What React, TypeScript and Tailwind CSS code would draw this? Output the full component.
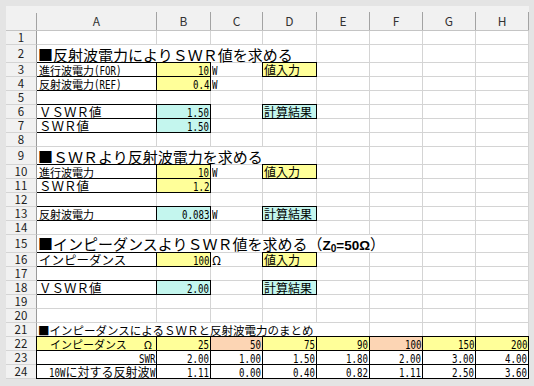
import React from 'react';

type Fill = 'w' | 'y' | 'c' | 'p';
type Edge = 'none' | 'tb' | 'box';

interface CellDef {
  v?: React.ReactNode;
  span?: number;
  fill?: Fill;
  edge?: Edge;
  cls?: string;
}

const fills: Record<Fill, string> = {
  w: 'bg-white',
  y: 'bg-[#ffff99]',
  c: 'bg-[#c4f6ee]',
  p: 'bg-[#fcd5b4]',
};

// black borders: own right/bottom border plus shadows painted over the neighbours' grid lines
const edges: Record<Edge, string> = {
  none: 'border-r-[#d4d4d4] border-b-[#d4d4d4]',
  tb: 'border-r-[#d4d4d4] border-b-black shadow-[0_-1px_0_#000]',
  box: 'border-r-black border-b-black shadow-[0_-1px_0_#000,-1px_0_0_#000,-1px_-1px_0_#000]',
};

const spans: Record<number, string> = {
  1: '',
  3: 'col-span-3',
  4: 'col-span-4',
  5: 'col-span-5',
  6: 'col-span-6',
};

// condensed half-width text (numbers, units, ascii labels)
const Narrow = ({ v }: { v: string }) => (
  <span
    className="inline-block origin-left scale-x-[0.7] font-['DejaVu_Sans_Mono',monospace] text-[13px] leading-[11px]"
    style={{ marginRight: -(v.length * 2.34) }}
  >
    {v}
  </span>
);

const blank = (count: number): CellDef[] => Array.from({ length: count }, () => ({}));

const num = (v: string, fill: Fill = 'w'): CellDef => ({
  v: <Narrow v={v} />,
  fill,
  edge: 'box',
  cls: 'justify-end pr-px',
});

const unit = (v: string): CellDef => ({ v: <Narrow v={v} />, cls: 'pl-px' });

const tag = (t: string, fill: Fill): CellDef => ({
  v: <span className="text-[12px]">{t}</span>,
  fill,
  edge: 'box',
  cls: 'pl-px',
});

const small = (jp: string, latin?: string): CellDef => ({
  v: (
    <>
      <span className="text-[11px]">{jp}</span>
      {latin && <Narrow v={latin} />}
    </>
  ),
  edge: 'tb',
  cls: 'pl-[2px]',
});

const big = (t: string): CellDef => ({
  v: <span className="text-[12.5px]">{t}</span>,
  edge: 'tb',
  cls: 'pl-[2px]',
});

const title = (t: React.ReactNode, span: number, size = 'text-[15px]'): CellDef => ({
  v: <span className={size}>{t}</span>,
  span,
  cls: 'pl-px',
});

const rows: CellDef[][] = [
  blank(8),
  [title('■反射波電力によりＳＷＲ値を求める', 4), ...blank(4)],
  [small('進行波電力', '(FOR)'), num('10', 'y'), unit('W'), tag('値入力', 'y'), ...blank(4)],
  [small('反射波電力', '(REF)'), num('0.4', 'y'), unit('W'), ...blank(5)],
  blank(8),
  [big('ＶＳＷＲ値'), num('1.50', 'c'), {}, tag('計算結果', 'c'), ...blank(4)],
  [big('ＳＷＲ値'), num('1.50', 'c'), ...blank(6)],
  blank(8),
  [title('■ＳＷＲより反射波電力を求める', 4), ...blank(4)],
  [small('進行波電力'), num('10', 'y'), unit('W'), tag('値入力', 'y'), ...blank(4)],
  [big('ＳＷＲ値'), num('1.2', 'y'), ...blank(6)],
  blank(8),
  [small('反射波電力'), num('0.083', 'c'), unit('W'), tag('計算結果', 'c'), ...blank(4)],
  blank(8),
  [
    title(
      <>
        ■インピーダンスよりＳＷＲ値を求める（
        <span className="font-['Liberation_Sans',sans-serif] text-[13.5px] font-bold">
          Z<sub>0</sub>=50Ω
        </span>
        ）
      </>,
      6,
    ),
    ...blank(2),
  ],
  [
    big('インピーダンス'),
    num('100', 'y'),
    { v: <span className="text-[12px]">Ω</span>, cls: 'pl-px' },
    tag('値入力', 'y'),
    ...blank(4),
  ],
  blank(8),
  [big('ＶＳＷＲ値'), num('2.00', 'c'), {}, tag('計算結果', 'c'), ...blank(4)],
  blank(8),
  blank(8),
  [title('■インピーダンスによるＳＷＲと反射波電力のまとめ', 5, 'text-[11.5px]'), ...blank(3)],
  [
    {
      v: (
        <>
          <span>インピーダンス</span>
          <span>Ω</span>
        </>
      ),
      fill: 'y',
      edge: 'box',
      cls: 'justify-between pl-[13px] pr-[4px] text-[11px]',
    },
    num('25', 'y'),
    num('50', 'p'),
    num('75', 'y'),
    num('90', 'y'),
    num('100', 'p'),
    num('150', 'y'),
    num('200', 'y'),
  ],
  [
    { v: <Narrow v="SWR" />, edge: 'box', cls: 'justify-end pr-px' },
    ...['2.00', '1.00', '1.50', '1.80', '2.00', '3.00', '4.00'].map((v) => num(v)),
  ],
  [
    {
      v: (
        <>
          <Narrow v="10W" />
          <span className="text-[12px]">に対する反射波</span>
          <Narrow v="W" />
        </>
      ),
      edge: 'box',
      cls: 'justify-end pr-px',
    },
    ...['1.11', '0.00', '0.40', '0.82', '1.11', '2.50', '3.60'].map((v) => num(v)),
  ],
];

const columns = ['A', 'B', 'C', 'D', 'E', 'F', 'G', 'H'];

function Cell({ d }: { d: CellDef }) {
  return (
    <div
      className={`flex items-end overflow-visible whitespace-nowrap border-r border-b leading-none text-black ${
        spans[d.span ?? 1]
      } ${edges[d.edge ?? 'none']} ${fills[d.fill ?? 'w']} ${d.cls ?? ''}`}
    >
      {d.v}
    </div>
  );
}

function HeaderCell({ label }: { label?: string }) {
  return (
    <div className="flex flex-col border-b border-b-[#c4c4c4] bg-[#f1f1f1]">
      <div className="h-[7px]" />
      <div className="flex flex-1 items-center justify-center border-r border-r-[#a3a3a3] text-[12px] text-[#333]">
        {label}
      </div>
    </div>
  );
}

export default function App() {
  return (
    <div className="h-[386px] w-[534px] overflow-hidden bg-[#e4e4e4] pl-[6px] pt-[6px] font-['Noto_Sans_CJK_JP','Noto_Sans',sans-serif]">
      <div className="grid w-[523px] grid-cols-[31px_120px_54px_52px_54px_53px_53px_53px_53px] grid-rows-[25px_14px_18px_14px_14px_14px_14px_14px_14px_18px_14px_14px_14px_14px_14px_18px_14px_14px_14px_14px_14px_14px_14px_14px_14px]">
        <HeaderCell />
        {columns.map((c) => (
          <HeaderCell key={c} label={c} />
        ))}
        {rows.map((cells, i) => (
          <React.Fragment key={i}>
            <div className="flex items-center justify-center border-r border-b border-r-[#9a9a9a] border-b-[#d4d4d4] bg-[#f1f1f1] text-[11.5px] leading-none text-[#222]">
              {i + 1}
            </div>
            {cells.map((d, j) => (
              <Cell key={j} d={d} />
            ))}
          </React.Fragment>
        ))}
      </div>
    </div>
  );
}
